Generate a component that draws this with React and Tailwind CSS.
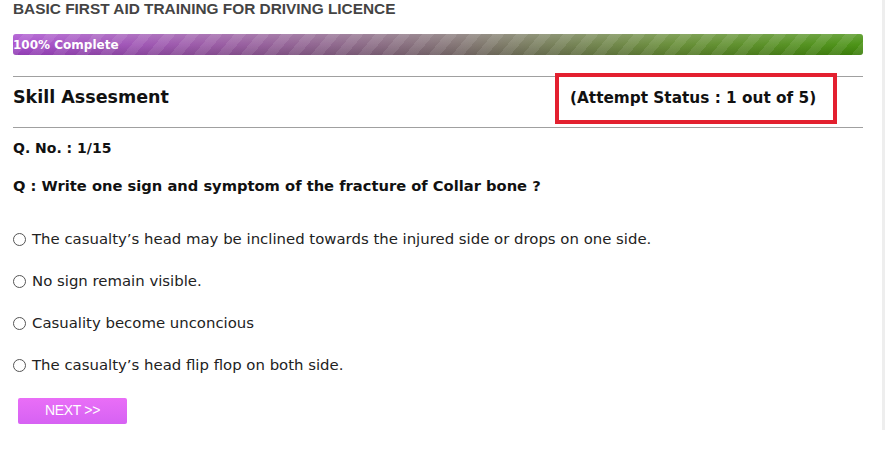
import React from "react";

const options = [
  "The casualty’s head may be inclined towards the injured side or drops on one side.",
  "No sign remain visible.",
  "Casuality become unconcious",
  "The casualty’s head flip flop on both side.",
];

export default function App() {
  return (
    <div className="relative w-[885px] h-[460px] bg-white overflow-hidden">
      <div className="flex h-full">
        <div className="w-[882px] h-full">
          <div className="pl-[13px] pr-[19px]">
            <div className="pt-[1px] text-[15.4px] leading-[16px] font-bold text-[#444] font-['Liberation_Sans',Arial,sans-serif]">
              BASIC FIRST AID TRAINING FOR DRIVING LICENCE
            </div>
            <div className="mt-[17px] h-[21px] rounded-[3px] overflow-hidden bg-[linear-gradient(90deg,#a547cc_0%,#95569f_25%,#7f7070_52%,#628a30_78%,#428e0a_100%)]">
              <div className="h-full bg-[linear-gradient(180deg,rgba(255,255,255,0.2)_0%,rgba(255,255,255,0.05)_50%,rgba(0,0,0,0.12)_100%)]">
                <div className="h-full flex items-center bg-[repeating-linear-gradient(-50deg,rgba(255,255,255,0.09)_0px,rgba(255,255,255,0.09)_9px,transparent_9px,transparent_18px)]">
                  <span className="text-white text-[12px] font-bold font-['DejaVu_Sans',Verdana,sans-serif] leading-none">
                    100% Complete
                  </span>
                </div>
              </div>
            </div>
            <div className="mt-[21px] border-t border-[#a0a0a0]" />
            <div className="h-[50px] pt-[8px]">
              <span className="text-[17.5px] leading-[24px] font-bold text-[#111] font-['DejaVu_Sans',Verdana,sans-serif]">
                Skill Assesment
              </span>
            </div>
            <div className="border-t border-[#a0a0a0]" />
            <div className="mt-[10px] text-[14px] leading-[20px] font-bold text-[#111] font-['DejaVu_Sans',Verdana,sans-serif]">
              Q. No. : 1/15
            </div>
            <div className="mt-[18px] text-[14.7px] leading-[20px] font-bold text-[#111] font-['DejaVu_Sans',Verdana,sans-serif]">
              Q : Write one sign and symptom of the fracture of Collar bone ?
            </div>
            <div className="mt-[33px] flex flex-col gap-[22px]">
              {options.map((o) => (
                <label key={o} className="flex items-center h-[20px] text-[14.9px] text-[#222] font-['DejaVu_Sans',Verdana,sans-serif]">
                  <span className="w-[13px] h-[13px] rounded-full border border-[#555] bg-white mr-[6px]" />
                  {o}
                </label>
              ))}
            </div>
            <div className="mt-[22px] pl-[5px]">
              <button className="w-[109px] h-[26px] rounded-[2px] bg-[linear-gradient(180deg,#e96ef7_0%,#d662f3_100%)] text-white text-[14px] font-['Liberation_Sans',Arial,sans-serif] tracking-[-0.3px]">
                NEXT &gt;&gt;
              </button>
            </div>
          </div>
        </div>
        <div className="w-[3px] h-[430px] bg-[#eeeeee]" />
      </div>
      <div className="absolute left-[555px] top-[73px] w-[282px] h-[51px] border-[4px] border-[#e3202f] flex items-center pl-[11px]">
        <span className="text-[15.3px] font-bold text-[#111] font-['DejaVu_Sans',Verdana,sans-serif]">
          (Attempt Status : 1 out of 5)
        </span>
      </div>
    </div>
  );
}
